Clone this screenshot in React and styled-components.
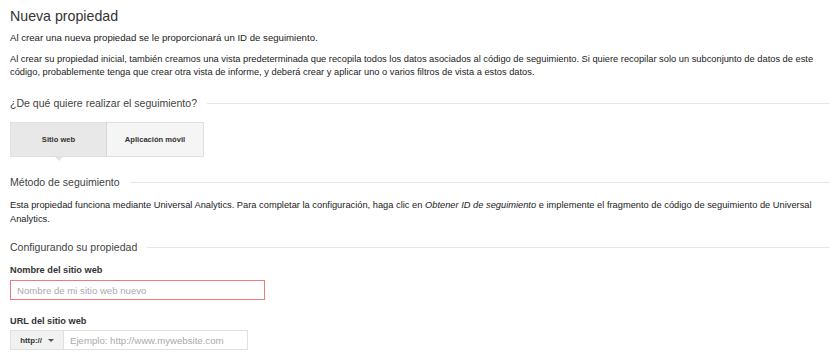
import React, { useState } from "react";
import styled, { createGlobalStyle } from "styled-components";

const GlobalStyle = createGlobalStyle`
  body {
    margin: 0;
    background: #ffffff;
    font-family: "Liberation Sans", Arial, sans-serif;
    color: #222;
  }
`;

const Page = styled.div`
  box-sizing: border-box;
  width: 840px;
  padding: 6px 10px 0 10px;
`;

const Title = styled.h1`
  margin: 0;
  font-size: 14.2px;
  line-height: 20px;
  font-weight: normal;
  color: #333;
`;

const Text = styled.p`
  margin: ${(p) => p.$top || 0}px 0 0 0;
  font-size: ${(p) => p.$size || 9.3}px;
  line-height: ${(p) => p.$lh || 13}px;
  color: #222;
`;

const SectionHeader = styled.div`
  display: flex;
  align-items: center;
  margin-top: ${(p) => p.$top}px;
  font-size: 10.55px;
  line-height: 14px;
  color: #444;

  &::after {
    content: "";
    flex: 1;
    height: 1px;
    margin-left: 10px;
    background: #e6e6e6;
  }
`;

const Tabs = styled.div`
  display: flex;
  margin-top: 12px;
  width: 194px;
`;

const Tab = styled.button`
  position: relative;
  box-sizing: border-box;
  width: 97px;
  height: 35px;
  padding: 0;
  font-family: "Liberation Sans", Arial, sans-serif;
  font-size: 7.6px;
  font-weight: bold;
  color: #333;
  cursor: pointer;
  background: ${(p) => (p.$active ? "#e8e8e8" : "#f5f5f5")};
  border: 1px solid #e0e0e0;
  border-left-width: ${(p) => (p.$first ? 1 : 0)}px;
  border-right-color: ${(p) => (p.$active ? "#d6d6d6" : "#e0e0e0")};

  &::after {
    content: "";
    display: ${(p) => (p.$active ? "block" : "none")};
    position: absolute;
    left: 44px;
    bottom: -5px;
    border-left: 4px solid transparent;
    border-right: 4px solid transparent;
    border-top: 4px solid #e3e3e3;
  }
`;

const Label = styled.div`
  margin-top: ${(p) => p.$top}px;
  font-size: 9.2px;
  font-weight: bold;
  line-height: 12px;
  color: #333;
`;

const NameInput = styled.input`
  display: block;
  box-sizing: border-box;
  width: 255px;
  height: 20px;
  margin-top: 4px;
  padding: 0 6px;
  font-family: "Liberation Sans", Arial, sans-serif;
  font-size: 9.64px;
  border: 1px solid #ec7c7c;
  outline: none;
  color: #333;

  &::placeholder {
    color: #aaa;
  }
`;

const UrlGroup = styled.div`
  display: flex;
  width: 238px;
  height: 20px;
  margin-top: 3px;
`;

const Protocol = styled.div`
  box-sizing: border-box;
  width: 54px;
  display: flex;
  align-items: center;
  justify-content: center;
  gap: 6px;
  background: #f1f1f1;
  border: 1px solid #e0e0e0;
  font-size: 7.8px;
  font-weight: bold;
  color: #333;
`;

const Caret = styled.span`
  width: 0;
  height: 0;
  border-left: 3px solid transparent;
  border-right: 3px solid transparent;
  border-top: 3px solid #555;
`;

const UrlInput = styled.input`
  box-sizing: border-box;
  flex: 1;
  height: 20px;
  padding: 0 6px;
  font-family: "Liberation Sans", Arial, sans-serif;
  font-size: 9.64px;
  border: 1px solid #e0e0e0;
  border-left: 0;
  outline: none;

  &::placeholder {
    color: #aaa;
  }
`;

export default function App() {
  const [tab, setTab] = useState("web");

  return (
    <>
      <GlobalStyle />
      <Page>
        <Title>Nueva propiedad</Title>
        <Text $top={5} $size={9.64}>
          Al crear una nueva propiedad se le proporcionará un ID de seguimiento.
        </Text>
        <Text $top={9}>
          Al crear su propiedad inicial, también creamos una vista predeterminada que recopila todos los datos asociados al código de seguimiento. Si quiere recopilar solo un subconjunto de datos de este código, probablemente tenga que crear otra vista de informe, y deberá crear y aplicar uno o varios filtros de vista a estos datos.
        </Text>

        <SectionHeader $top={17}>¿De qué quiere realizar el seguimiento?</SectionHeader>
        <Tabs>
          <Tab $first $active={tab === "web"} onClick={() => setTab("web")}>
            Sitio web
          </Tab>
          <Tab $active={tab === "app"} onClick={() => setTab("app")}>
            Aplicación móvil
          </Tab>
        </Tabs>

        <SectionHeader $top={18}>Método de seguimiento</SectionHeader>
        <Text $top={9} $lh={14}>
          Esta propiedad funciona mediante Universal Analytics. Para completar la configuración, haga clic en{" "}
          <em>Obtener ID de seguimiento</em> e implemente el fragmento de código de seguimiento de Universal Analytics.
        </Text>

        <SectionHeader $top={14}>Configurando su propiedad</SectionHeader>
        <Label $top={10}>Nombre del sitio web</Label>
        <NameInput placeholder="Nombre de mi sitio web nuevo" />

        <Label $top={15}>URL del sitio web</Label>
        <UrlGroup>
          <Protocol>
            http://
            <Caret />
          </Protocol>
          <UrlInput placeholder="Ejemplo: http://www.mywebsite.com" />
        </UrlGroup>
      </Page>
    </>
  );
}
